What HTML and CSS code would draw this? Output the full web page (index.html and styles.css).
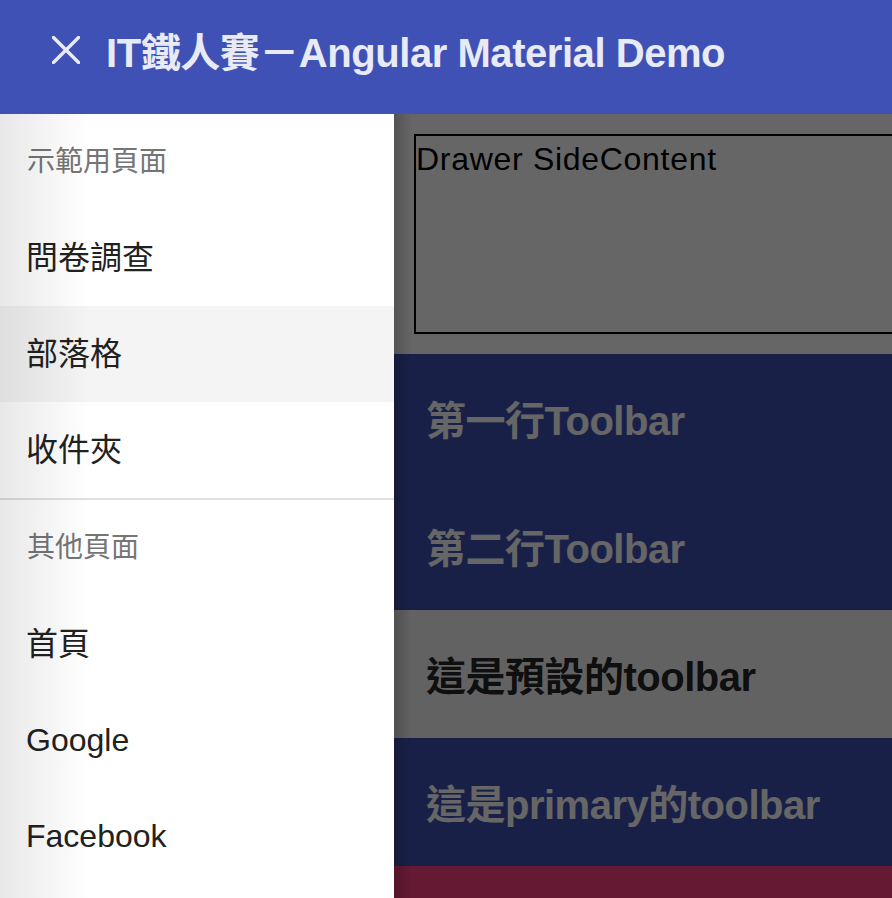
FILE: index.html
```html
<!DOCTYPE html>
<html lang="zh-Hant">
<head>
    <meta charset="UTF-8">
    <meta name="viewport" content="width=device-width, initial-scale=1.0">
    <title>IT鐵人賽－Angular Material Demo</title>
    <link rel="stylesheet" href="styles.css">
</head>
<body>
    <header class="topbar">
        <button class="icon-btn" type="button" aria-label="close">
            <svg width="28" height="28" viewBox="0 0 28 28">
                <line x1="1.5" y1="1.5" x2="26.5" y2="26.5" />
                <line x1="26.5" y1="1.5" x2="1.5" y2="26.5" />
            </svg>
        </button>
        <h1>IT鐵人賽－Angular Material Demo</h1>
    </header>

    <div class="drawer-container">
        <aside class="drawer">
            <div class="subheader">示範用頁面</div>
            <ul class="nav-list">
                <li><a href="#">問卷調查</a></li>
                <li class="active"><a href="#">部落格</a></li>
                <li><a href="#">收件夾</a></li>
            </ul>
            <hr class="divider">
            <div class="subheader">其他頁面</div>
            <ul class="nav-list">
                <li><a href="#">首頁</a></li>
                <li><a href="#">Google</a></li>
                <li><a href="#">Facebook</a></li>
            </ul>
        </aside>

        <main class="drawer-content">
            <div class="side-box">Drawer SideContent</div>

            <div class="toolbar primary">
                <div class="toolbar-row">第一行Toolbar</div>
                <div class="toolbar-row">第二行Toolbar</div>
            </div>
            <div class="toolbar">
                <div class="toolbar-row">這是預設的toolbar</div>
            </div>
            <div class="toolbar primary">
                <div class="toolbar-row">這是primary的toolbar</div>
            </div>
            <div class="toolbar accent">
                <div class="toolbar-row"></div>
            </div>

            <div class="backdrop"></div>
        </main>
    </div>
</body>
</html>
```

FILE: styles.css
```css
body {
    margin: 0;
    padding: 0;
    font-family: "Liberation Sans", "Noto Sans CJK TC", sans-serif;
    background: #fff;
    overflow: hidden;
}
.topbar {
    height: 114px;
    box-sizing: border-box;
    padding: 0 0 14px 52px;
    display: flex;
    align-items: center;
    background-color: #3F51B5;
    color: #e8eaf6;
}
.icon-btn {
    padding: 0;
    margin: 0 26px 0 0;
    border: none;
    background: none;
    width: 28px;
    height: 28px;
    display: flex;
}
.icon-btn svg line {
    stroke: #e8eaf6;
    stroke-width: 3.4;
    stroke-linecap: square;
}
.topbar h1 {
    margin: 0;
    font-size: 40px;
    font-weight: bold;
    letter-spacing: -0.45px;
    white-space: nowrap;
}
.drawer-container {
    display: flex;
    height: 784px;
    overflow: hidden;
}
.drawer {
    position: relative;
    flex: 0 0 394px;
    background: #fff;
}
.drawer::after {
    content: "";
    position: absolute;
    top: 0;
    left: 0;
    bottom: 0;
    width: 90px;
    background: linear-gradient(to right, rgba(0,0,0,0.09), rgba(0,0,0,0));
    pointer-events: none;
}
.subheader {
    height: 96px;
    line-height: 96px;
    padding-left: 27px;
    font-size: 28px;
    color: #757575;
}
.nav-list {
    list-style: none;
    margin: 0;
    padding: 0;
}
.nav-list li a {
    display: block;
    height: 96px;
    line-height: 97px;
    padding-left: 26px;
    font-size: 32px;
    color: #212121;
    text-decoration: none;
}
.nav-list li.active {
    background-color: #f4f4f4;
}
.divider {
    margin: 0;
    border: none;
    border-top: 2px solid #e0e0e0;
}
.drawer-content {
    position: relative;
    flex: 0 0 892px;
    background: #fff;
}
.side-box {
    width: 852px;
    height: 200px;
    box-sizing: border-box;
    margin: 20px;
    border: 2px solid #000;
    font-size: 32px;
    line-height: 46px;
    letter-spacing: 0.7px;
    color: #000;
}
.toolbar {
    background-color: #f5f5f5;
    color: rgba(0,0,0,0.87);
}
.toolbar.primary {
    background-color: #3F51B5;
    color: #fff;
}
.toolbar.accent {
    background-color: #ff4081;
    color: #fff;
}
.toolbar-row {
    height: 128px;
    display: flex;
    align-items: center;
    padding: 0 32px;
    font-size: 40px;
    font-weight: bold;
    letter-spacing: -0.5px;
    white-space: nowrap;
}
.backdrop {
    position: absolute;
    top: 0;
    left: 0;
    right: 0;
    bottom: 0;
    background: linear-gradient(to right, rgba(0,0,0,0.18), rgba(0,0,0,0) 18px), rgba(0,0,0,0.6);
}
```
